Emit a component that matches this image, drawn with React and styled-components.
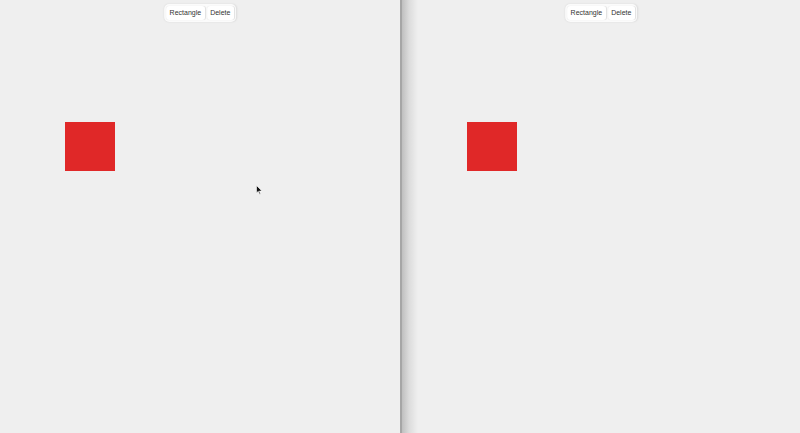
import React from "react";
import styled, { createGlobalStyle } from "styled-components";

const Global = createGlobalStyle`
  html, body { margin: 0; padding: 0; width: 800px; height: 433px; overflow: hidden; background: #efefef; }
  #root { width: 800px; height: 433px; }
`;

const Page = styled.div`
  display: flex;
  width: 800px;
  height: 433px;
  font-family: "Liberation Sans", Arial, sans-serif;
`;

const Pane = styled.div`
  position: relative;
  flex: 0 0 ${(p) => p.$w}px;
  height: 100%;
  background: #efefef;
  overflow: hidden;
`;

const EdgeShadow = styled.div`
  position: absolute;
  left: 0;
  top: 0;
  bottom: 0;
  width: 16px;
  background: linear-gradient(to right, rgba(0,0,0,0.2), rgba(0,0,0,0.08) 45%, rgba(0,0,0,0));
  pointer-events: none;
`;

const Divider = styled.div`
  flex: 0 0 2px;
  background: #a6a6a6;
`;

const Toolbar = styled.div`
  position: absolute;
  top: 4px;
  left: 50%;
  transform: translateX(-50%);
  display: flex;
  align-items: center;
  gap: 2px;
  padding: 2px;
  height: 14px;
  background: #fbfbfb;
  border-radius: 5px;
  box-shadow: 0 0 2px rgba(0,0,0,0.1);
`;

const Btn = styled.button`
  font-family: "Liberation Sans", Arial, sans-serif;
  font-size: 7px;
  color: #333;
  background: #ffffff;
  border: none;
  border-radius: 3px;
  box-shadow: 0 0 1px rgba(0,0,0,0.12);
  height: 14px;
  padding: 0 3.5px;
  line-height: 14px;
  cursor: default;
`;

const Square = styled.div`
  position: absolute;
  left: ${(p) => p.$x}px;
  top: 122px;
  width: 50px;
  height: 49px;
  background: #e02828;
`;

const Cursor = styled.svg`
  position: absolute;
  left: 256px;
  top: 185px;
`;

export default function App() {
  return (
    <>
      <Global />
      <Page>
        <Pane $w={400}>
          <Toolbar>
            <Btn>Rectangle</Btn>
            <Btn>Delete</Btn>
          </Toolbar>
          <Square $x={65} />
          <Cursor width="7" height="10" viewBox="0 0 7 10">
            <path d="M0.5 0.5 L0.5 8 L2.3 6.3 L3.6 9.3 L4.6 8.9 L3.4 6 L6 6 Z" fill="#111" stroke="#fff" strokeWidth="0.6" />
          </Cursor>
        </Pane>
        <Divider />
        <Pane $w={398}>
          <EdgeShadow />
          <Toolbar>
            <Btn>Rectangle</Btn>
            <Btn>Delete</Btn>
          </Toolbar>
          <Square $x={65} />
        </Pane>
      </Page>
    </>
  );
}
